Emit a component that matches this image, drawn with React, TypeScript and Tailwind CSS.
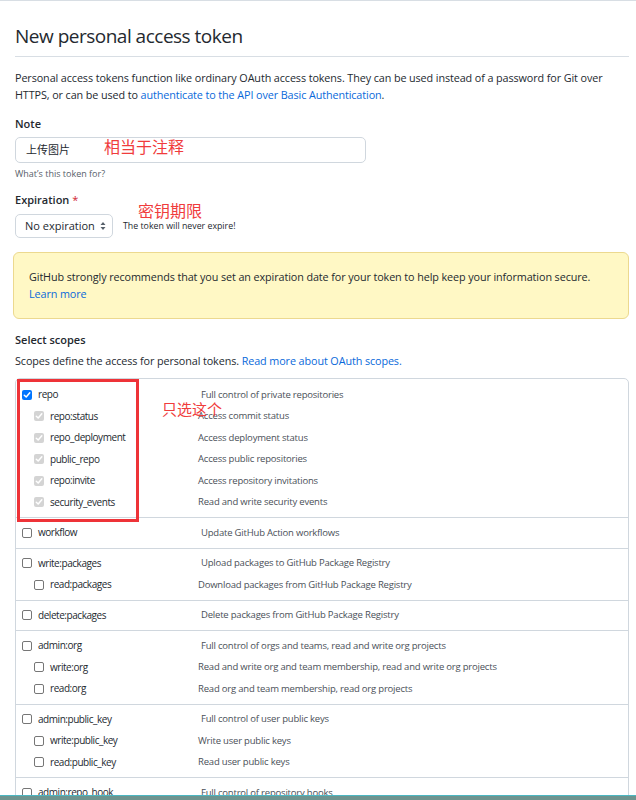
import React from "react";

type Scope = {
  name: string;
  desc: string;
  checked?: boolean;
  sub?: { name: string; desc: string }[];
};

const scopes: Scope[] = [
  {
    name: "repo",
    desc: "Full control of private repositories",
    checked: true,
    sub: [
      { name: "repo:status", desc: "Access commit status" },
      { name: "repo_deployment", desc: "Access deployment status" },
      { name: "public_repo", desc: "Access public repositories" },
      { name: "repo:invite", desc: "Access repository invitations" },
      { name: "security_events", desc: "Read and write security events" },
    ],
  },
  { name: "workflow", desc: "Update GitHub Action workflows" },
  {
    name: "write:packages",
    desc: "Upload packages to GitHub Package Registry",
    sub: [{ name: "read:packages", desc: "Download packages from GitHub Package Registry" }],
  },
  { name: "delete:packages", desc: "Delete packages from GitHub Package Registry" },
  {
    name: "admin:org",
    desc: "Full control of orgs and teams, read and write org projects",
    sub: [
      { name: "write:org", desc: "Read and write org and team membership, read and write org projects" },
      { name: "read:org", desc: "Read org and team membership, read org projects" },
    ],
  },
  {
    name: "admin:public_key",
    desc: "Full control of user public keys",
    sub: [
      { name: "write:public_key", desc: "Write user public keys" },
      { name: "read:public_key", desc: "Read user public keys" },
    ],
  },
  { name: "admin:repo_hook", desc: "Full control of repository hooks" },
];

const Check = ({ state }: { state: "on" | "off" | "disabled" }) => {
  if (state === "off")
    return <span className="block w-[10px] h-[10px] rounded-[2px] border border-[#767676] bg-white shrink-0" />;
  return (
    <span
      className={
        state === "on"
          ? "flex items-center justify-center w-[10px] h-[10px] rounded-[2px] bg-[#0075ff] shrink-0"
          : "flex items-center justify-center w-[10px] h-[10px] rounded-[2px] bg-[#d4d4d4] shrink-0"
      }
    >
      <svg width="8" height="8" viewBox="0 0 8 8" fill="none">
        <path d="M1.3 4.2 3.2 6 6.8 1.8" stroke="white" strokeWidth="1.5" strokeLinecap="round" strokeLinejoin="round" />
      </svg>
    </span>
  );
};

const Row = ({ name, desc, state, sub }: { name: string; desc: string; state: "on" | "off" | "disabled"; sub?: boolean }) => (
  <div className="flex items-center h-[21.5px]">
    <div className={sub ? "flex items-center w-[182px] pl-[18px] gap-[6px]" : "flex items-center w-[185px] pl-[6px] gap-[6px]"}>
      <Check state={state} />
      <span className="text-[10px] tracking-[-0.45px] text-[#24292f] whitespace-nowrap">{name}</span>
    </div>
    <span className="text-[9.5px] tracking-[-0.2px] text-[#4a5058] whitespace-nowrap">{desc}</span>
  </div>
);

export default function App() {
  return (
    <div
      className="relative w-[636px] h-[800px] overflow-hidden bg-white border-t border-[#d8dee4] text-[#24292f]"
      style={{ fontFamily: '"Open Sans", "Noto Sans CJK SC", sans-serif' }}
    >
      <div className="pl-[15px] pr-[7px]">
        <div className="pt-[24px] pb-[9px] border-b border-[#d8dee4]">
          <h1 className="text-[19px] leading-[22px] tracking-[-0.5px] font-normal">New personal access token</h1>
        </div>

        <p className="mt-[12px] text-[10.8px] leading-[17px] tracking-[-0.1px]">
          Personal access tokens function like ordinary OAuth access tokens. They can be used instead of a password for Git over HTTPS, or can be used to{" "}
          <span className="text-[#0969da]">authenticate to the API over Basic Authentication</span>.
        </p>

        <div className="relative">
          <div className="mt-[12px] text-[11px] leading-[17px] font-semibold">Note</div>
          <div className="mt-[5px] w-[351px] h-[26px] rounded-[5px] border border-[#d0d7de] flex items-center pl-[10px] text-[11px]">
            上传图片
          </div>
          <div className="mt-[4px] text-[9px] leading-[13px] text-[#57606a]">What’s this token for?</div>
          <span className="absolute left-[89px] top-[20px] text-[16px] text-[#f03c3c]">相当于注释</span>
        </div>

        <div className="relative">
          <div className="mt-[11px] text-[11px] leading-[17px] font-semibold">
            Expiration <span className="text-[#cf222e] font-normal">*</span>
          </div>
          <div className="mt-[6px] flex items-center gap-[10px]">
            <div className="w-[98px] h-[24px] rounded-[5px] border border-[#d0d7de] flex items-center justify-between pl-[9px] pr-[6px] text-[11px]">
              <span>No expiration</span>
              <svg width="6" height="10" viewBox="0 0 6 10">
                <path d="M3 1 5.5 4H.5z M3 9 .5 6h5z" fill="#57606a" />
              </svg>
            </div>
            <span className="text-[8.8px] text-[#24292f] pt-[2px]">The token will never expire!</span>
          </div>
          <span className="absolute left-[123px] top-[8px] text-[16px] text-[#f03c3c]">密钥期限</span>
        </div>

        <div className="mt-[14px] ml-[-2px] h-[67px] rounded-[6px] border border-[#ecd98f] bg-[#fff8c5] pl-[15px] pt-[15px] text-[10.8px] leading-[17px] tracking-[-0.1px]">
          <div>GitHub strongly recommends that you set an expiration date for your token to help keep your information secure.</div>
          <div className="text-[#0969da]">Learn more</div>
        </div>

        <div className="mt-[12px] text-[11px] leading-[17px] font-semibold">Select scopes</div>
        <p className="mt-[4px] text-[10.8px] leading-[17px] tracking-[-0.1px]">
          Scopes define the access for personal tokens. <span className="text-[#0969da]">Read more about OAuth scopes.</span>
        </p>

        <div className="relative mt-[9px] border border-[#d0d7de] rounded-t-[5px]">
          {scopes.map((s, i) => (
            <div key={s.name} className={i === 0 ? "pt-[5px] pb-[4px]" : "pt-[4px] pb-[4px] border-t border-[#d0d7de]"}>
              <Row name={s.name} desc={s.desc} state={s.checked ? "on" : "off"} />
              {s.sub?.map((c) => (
                <Row key={c.name} name={c.name} desc={c.desc} state={s.checked ? "disabled" : "off"} sub />
              ))}
            </div>
          ))}
          <div className="absolute left-[1px] top-[0px] w-[122px] h-[143px] border-[3px] border-[#ee3338]" />
          <span className="absolute left-[146px] top-[19px] text-[15px] text-[#f03c3c]">只选这个</span>
        </div>
      </div>

      <div className="absolute left-0 right-0 bottom-0 h-[5px] bg-[#6e948f] border-t border-[#4cb7c2]" />
    </div>
  );
}
